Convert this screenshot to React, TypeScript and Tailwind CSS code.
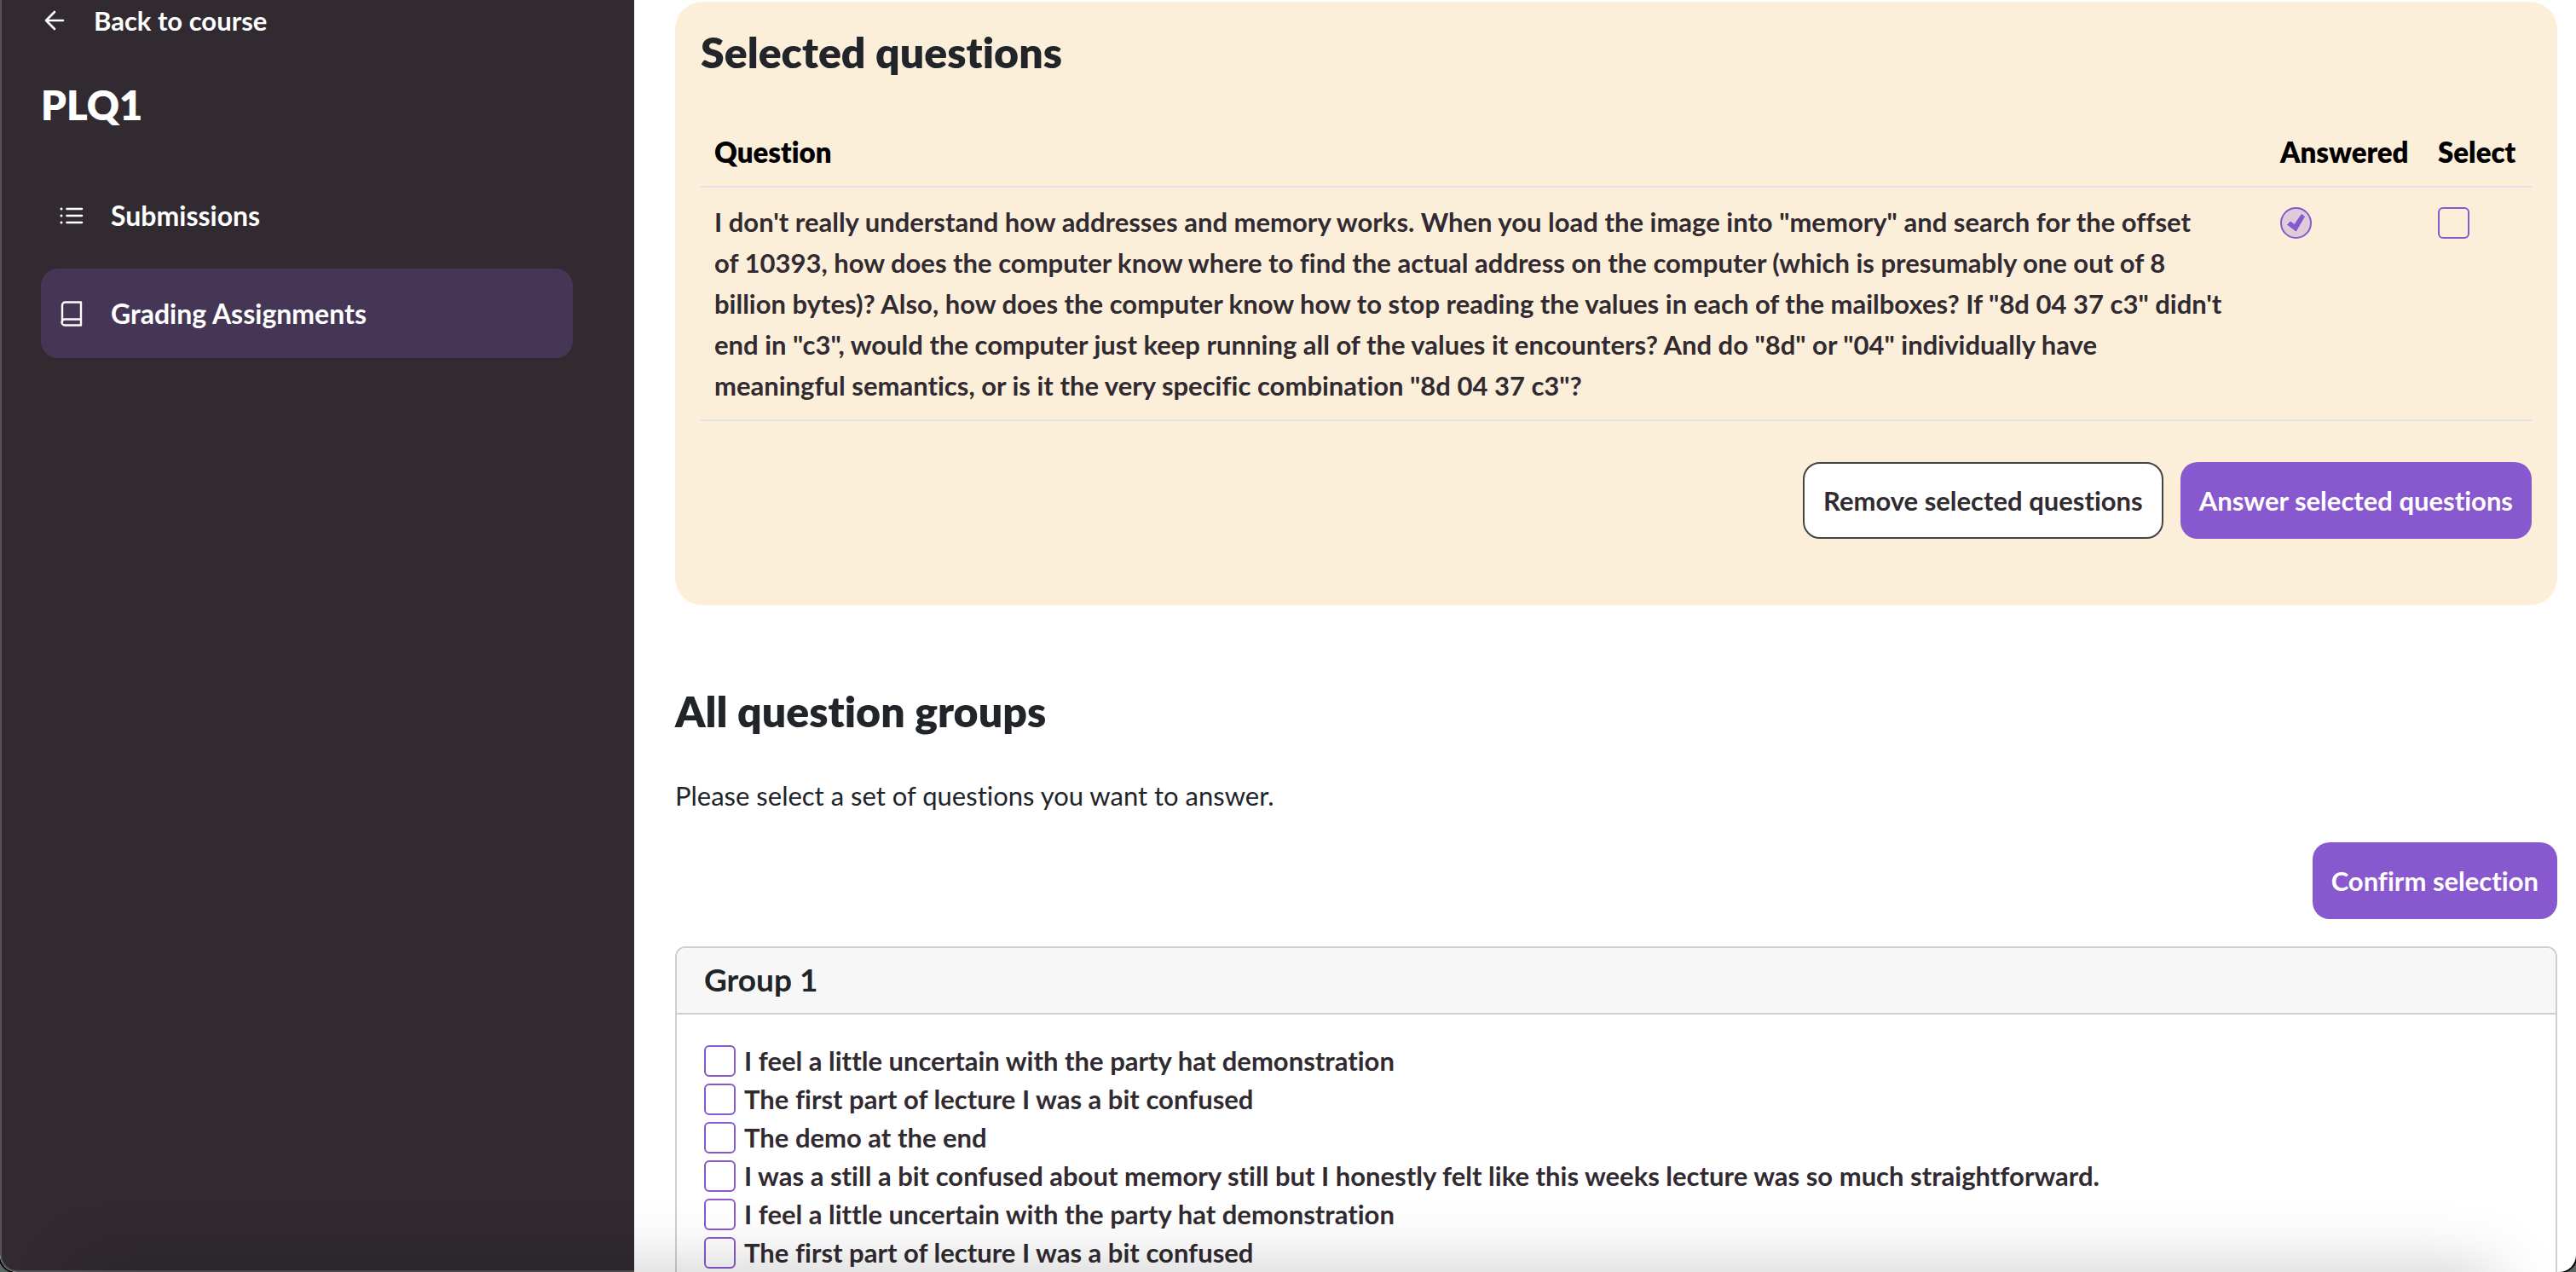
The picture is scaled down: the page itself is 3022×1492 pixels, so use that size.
import React from "react";

const questionLines = [
  `I don't really understand how addresses and memory works. When you load the image into "memory" and search for the offset`,
  `of 10393, how does the computer know where to find the actual address on the computer (which is presumably one out of 8`,
  `billion bytes)? Also, how does the computer know how to stop reading the values in each of the mailboxes? If "8d 04 37 c3" didn't`,
  `end in "c3", would the computer just keep running all of the values it encounters? And do "8d" or "04" individually have`,
  `meaningful semantics, or is it the very specific combination "8d 04 37 c3"?`,
];

const groupQuestions = [
  "I feel a little uncertain with the party hat demonstration",
  "The first part of lecture I was a bit confused",
  "The demo at the end",
  "I was a still a bit confused about memory still but I honestly felt like this weeks lecture was so much straightforward.",
  "I feel a little uncertain with the party hat demonstration",
  "The first part of lecture I was a bit confused",
];

function ArrowIcon() {
  return (
    <svg className="h-8 w-8 shrink-0" viewBox="0 0 32 32" fill="none" stroke="currentColor" strokeWidth="2.6" strokeLinecap="round" strokeLinejoin="round" aria-hidden="true">
      <path d="M26 16H6M16 6L6 16l10 10" />
    </svg>
  );
}

function ListIcon() {
  return (
    <svg className="h-9 w-9 shrink-0" viewBox="0 0 36 36" stroke="currentColor" strokeLinecap="round" aria-hidden="true">
      <path d="M12.5 10H30M12.5 18H30M12.5 26H30" strokeWidth="2.6" />
      <path d="M6 10h.01M6 18h.01M6 26h.01" strokeWidth="3" />
    </svg>
  );
}

function BookIcon() {
  return (
    <svg className="h-9 w-9 shrink-0" viewBox="0 0 36 36" fill="none" stroke="currentColor" strokeWidth="2.4" strokeLinejoin="round" aria-hidden="true">
      <path d="M29 24.500H10a3 3 0 0 0 0 7H29V4.500H10.500a3.500 3.500 0 0 0-3.500 3.500V28" />
    </svg>
  );
}

function Checkbox({ id, label }: { id: string; label?: string }) {
  return (
    <input
      id={id}
      type="checkbox"
      aria-label={label}
      className="block size-[37px] shrink-0 appearance-none rounded-md border-2 border-[#8858cf] checked:bg-[#8858cf]"
    />
  );
}

function AnsweredMark() {
  return (
    <span className="relative block size-[37px]">
      <input
        type="checkbox"
        aria-label="Answered"
        checked
        readOnly
        className="block size-[37px] appearance-none rounded-full border-2 border-[#8858cf] bg-[#dfcbd9]"
      />
      <svg className="pointer-events-none absolute inset-0 size-[37px]" viewBox="0 0 37 37" aria-hidden="true">
        <path d="M8.500 20.500L12 17L16.700 20.500L25 8.500L28.500 11L18.500 28z" fill="#8858cf" stroke="#8858cf" strokeWidth="1" strokeLinejoin="round" />
      </svg>
    </span>
  );
}

function PrimaryButton({ children }: { children: React.ReactNode }) {
  return (
    <button type="button" className="h-[90px] rounded-[20px] bg-[#8858cf] px-[22px] text-white">
      {children}
    </button>
  );
}

export default function App() {
  return (
    <div className="h-screen overflow-hidden bg-[#5b6762] font-['Lato',sans-serif] text-[31px] leading-[48px] font-bold text-[#312b31] [font-variant-ligatures:none]">
      <div className="relative flex h-full overflow-hidden rounded-b-[20px] bg-white shadow-[0_0_0_2px_#000]">
        <aside className="w-[744px] shrink-0 rounded-bl-[20px] border-b-2 border-l-2 border-[#565156] bg-[#312b31] pr-[72px] pl-[46px] text-white">
          <a href="#course" className="flex items-center gap-[30px]">
            <ArrowIcon />
            Back to course
          </a>
          <h1 className="mt-[45px] text-[47px] leading-[60px] font-extrabold">PLQ1</h1>
          <nav className="mt-[47px] flex flex-col gap-[10px] text-[32px]">
            <a href="#submissions" className="flex h-[105px] items-center gap-7 rounded-[20px] pl-[18px]">
              <ListIcon />
              Submissions
            </a>
            <a href="#grading" aria-current="page" className="flex h-[105px] items-center gap-7 rounded-[20px] bg-[#453656] pl-[18px]">
              <BookIcon />
              Grading Assignments
            </a>
          </nav>
        </aside>

        <main className="min-w-0 flex-1 pt-[2px] pr-[22px] pl-12">
          <section className="rounded-[32px] bg-[#fcefda] px-[30px] pt-[30px] pb-[78px]">
            <h2 className="text-[50px] leading-[58px] font-extrabold text-[#212529]">Selected questions</h2>
            <table className="mt-12 w-full table-fixed border-collapse text-left align-top">
              <thead>
                <tr className="border-b-2 border-[#dee2e6] text-[33px] text-black">
                  <th className="px-4 py-4 font-extrabold">Question</th>
                  <th className="w-[185px] px-4 py-4 font-extrabold">Answered</th>
                  <th className="w-[126px] px-4 py-4 font-extrabold">Select</th>
                </tr>
              </thead>
              <tbody>
                <tr className="border-b-2 border-[#dee2e6] align-top">
                  <td className="px-4 py-4 whitespace-pre">{questionLines.join("\n")}</td>
                  <td className="px-4 pt-[23px]"><AnsweredMark /></td>
                  <td className="px-4 pt-[23px]"><Checkbox id="select-0" label="Select question" /></td>
                </tr>
              </tbody>
            </table>
            <div className="mt-12 flex justify-end gap-5">
              <button type="button" className="h-[90px] rounded-[20px] border-2 border-[#444] bg-white px-[22px]">
                Remove selected questions
              </button>
              <PrimaryButton>Answer selected questions</PrimaryButton>
            </div>
          </section>

          <h2 className="mt-[94px] text-[50px] leading-[60px] font-extrabold text-[#212529]">All question groups</h2>
          <p className="mt-[45px] font-normal text-[#212529]">Please select a set of questions you want to answer.</p>
          <div className="mt-[31px] flex justify-end">
            <PrimaryButton>Confirm selection</PrimaryButton>
          </div>

          <section className="mt-8 overflow-hidden rounded-xl border-2 border-[#cfcfcf]">
            <h3 className="border-b-2 border-[#cfcfcf] bg-[#f7f7f7] px-8 pt-[13px] pb-[15px] text-[37px] text-[#212529]">Group 1</h3>
            <ul className="px-8 pt-8 pb-12">
              {groupQuestions.map((q, i) => (
                <li key={i} className="flex h-[45px] items-center gap-[10px]">
                  <Checkbox id={`group-1-${i}`} />
                  <label htmlFor={`group-1-${i}`} className="pb-[2px]">{q}</label>
                </li>
              ))}
            </ul>
          </section>
        </main>

        <div className="pointer-events-none absolute inset-x-24 top-full h-20 shadow-[0_0_80px_rgba(0,0,0,0.22)]" />
      </div>
    </div>
  );
}
